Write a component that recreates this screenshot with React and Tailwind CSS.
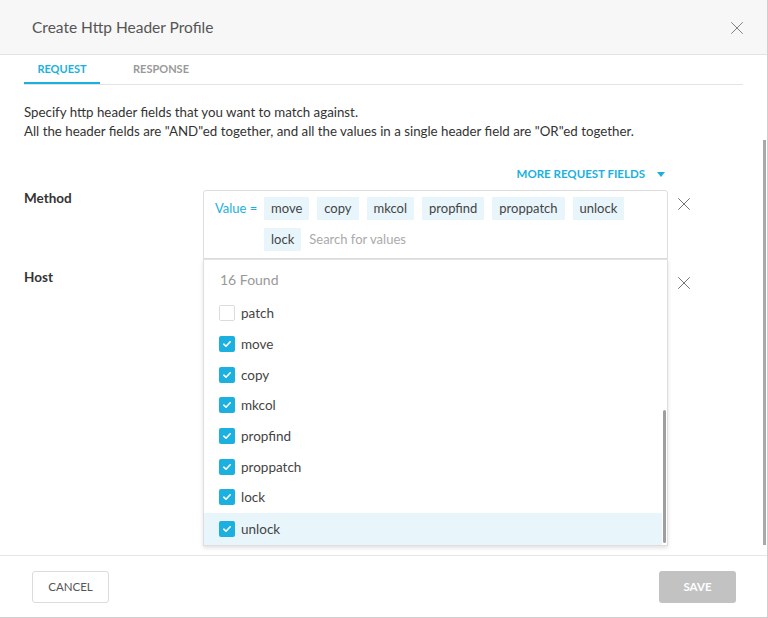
import { X } from "lucide-react";

const chips = ["move", "copy", "mkcol", "propfind", "proppatch", "unlock", "lock"];
const options = [
  { name: "patch", checked: false },
  { name: "move", checked: true },
  { name: "copy", checked: true },
  { name: "mkcol", checked: true },
  { name: "propfind", checked: true },
  { name: "proppatch", checked: true },
  { name: "lock", checked: true },
  { name: "unlock", checked: true, active: true },
];

function Checkbox({ checked }) {
  if (!checked) {
    return <span className="w-4 h-4 rounded-[2px] border border-[#dcdcdc] bg-white shrink-0" />;
  }
  return (
    <span className="w-4 h-4 rounded-[2px] bg-[#1bb0e0] flex items-center justify-center shrink-0">
      <svg width="10" height="10" viewBox="0 0 10 10" fill="none">
        <polyline points="1.8,5.2 4,7.2 8.2,2.8" stroke="white" strokeWidth="1.6" strokeLinecap="round" strokeLinejoin="round" />
      </svg>
    </span>
  );
}

export default function App() {
  return (
    <div className="w-[768px] h-[618px] bg-white flex flex-col border-r border-b border-[#cfcfcf] relative font-['Lato','Noto_Sans',sans-serif] text-[#333]">
      <div className="h-[55px] shrink-0 bg-[#f7f7f7] border-b border-[#e3e3e3] flex items-center justify-between pl-8 pr-[19px] pt-[2px]">
        <h1 className="text-[15.5px] text-[#555]">Create Http Header Profile</h1>
        <X size={22} strokeWidth={1} className="text-[#777]" />
      </div>

      <div className="flex-1 relative px-6">
        <div className="flex h-[30px] border-b border-[#e3e3e3]">
          <div className="w-[76px] flex items-center justify-center pt-[2px] text-[11px] font-bold text-[#1bb0e0] border-b-2 border-[#1bb0e0]">
            REQUEST
          </div>
          <div className="ml-[33px] flex items-center text-[11px] font-bold text-[#999]">RESPONSE</div>
        </div>

        <div className="mt-[18px] text-[13.3px] leading-[19px] text-[#333]">
          <p>Specify http header fields that you want to match against.</p>
          <p>All the header fields are "AND"ed together, and all the values in a single header field are "OR"ed together.</p>
        </div>

        <div className="mt-[25px] w-[644px] flex justify-end items-center h-4">
          <span className="text-[11.5px] font-bold text-[#1bb0e0]">MORE REQUEST FIELDS</span>
          <svg width="8" height="5" viewBox="0 0 8 5" className="ml-[12px] mr-[3px]">
            <polygon points="0,0 8,0 4,5" fill="#1bb0e0" />
          </svg>
        </div>

        <div className="mt-[8px] flex items-start relative">
          <div className="w-[179px] text-[13.5px] font-bold leading-[16px]">Method</div>
          <div className="w-[465px] relative">
            <div className="border border-[#dedede] rounded-t-[3px] flex items-start pl-[11px] pr-3 pt-[6px] pb-[7px]">
              <span className="text-[13px] text-[#1bb0e0] leading-[23px] w-[49px] shrink-0">Value =</span>
              <div className="flex flex-wrap gap-x-2 gap-y-2">
                {chips.map((c) => (
                  <span key={c} className="h-[23px] px-[7px] bg-[#e8f6fc] text-[13px] leading-[23px] text-[#444]">
                    {c}
                  </span>
                ))}
                <span className="h-[23px] text-[13px] leading-[23px] text-[#aaa]">Search for values</span>
              </div>
            </div>

            <div className="absolute left-0 top-full w-[465px] h-[287px] bg-white border border-t-0 border-[#dedede] shadow-[0_2px_4px_rgba(0,0,0,0.12)] z-10 overflow-hidden">
              <div className="border-t border-[#e3e3e3] h-[39px] flex items-center pl-4 text-[14px] text-[#999]">
                16 Found
              </div>
              {options.map((o) => (
                <div
                  key={o.name}
                  className={
                    "h-[30.7px] flex items-center pl-[15px] gap-[6px] text-[13.5px] text-[#444] mr-[5px] " +
                    (o.active ? "bg-[#e8f6fc] h-[32px]" : "")
                  }
                >
                  <Checkbox checked={o.checked} />
                  <span>{o.name}</span>
                </div>
              ))}
              <div className="absolute right-[1px] top-[151px] bottom-[2px] w-[3px] rounded-full bg-[#9e9e9e]" />
            </div>
          </div>
          <div className="w-[32px] flex justify-center pt-[3px]">
            <X size={22} strokeWidth={1} className="text-[#666]" />
          </div>
        </div>

        <div className="mt-[10px] flex items-start">
          <div className="w-[179px] text-[13.5px] font-bold leading-[16px]">Host</div>
          <div className="w-[465px] h-[30px] border border-[#dedede] rounded-[3px]" />
          <div className="w-[32px] flex justify-center pt-[3px]">
            <X size={22} strokeWidth={1} className="text-[#666]" />
          </div>
        </div>

        <div className="absolute right-[1px] top-[85px] w-[3px] h-[405px] bg-[#a9a9a9]" />
      </div>

      <div className="h-[62px] shrink-0 border-t border-[#e6e6e6] flex items-center justify-between pl-8 pr-[31px]">
        <button className="w-[77px] h-[32px] border border-[#dcdcdc] rounded-[3px] text-[11.5px] text-[#555] bg-white">
          CANCEL
        </button>
        <button className="w-[77px] h-[32px] rounded-[3px] bg-[#c2c2c2] text-[11.5px] font-bold text-white">SAVE</button>
      </div>
    </div>
  );
}
